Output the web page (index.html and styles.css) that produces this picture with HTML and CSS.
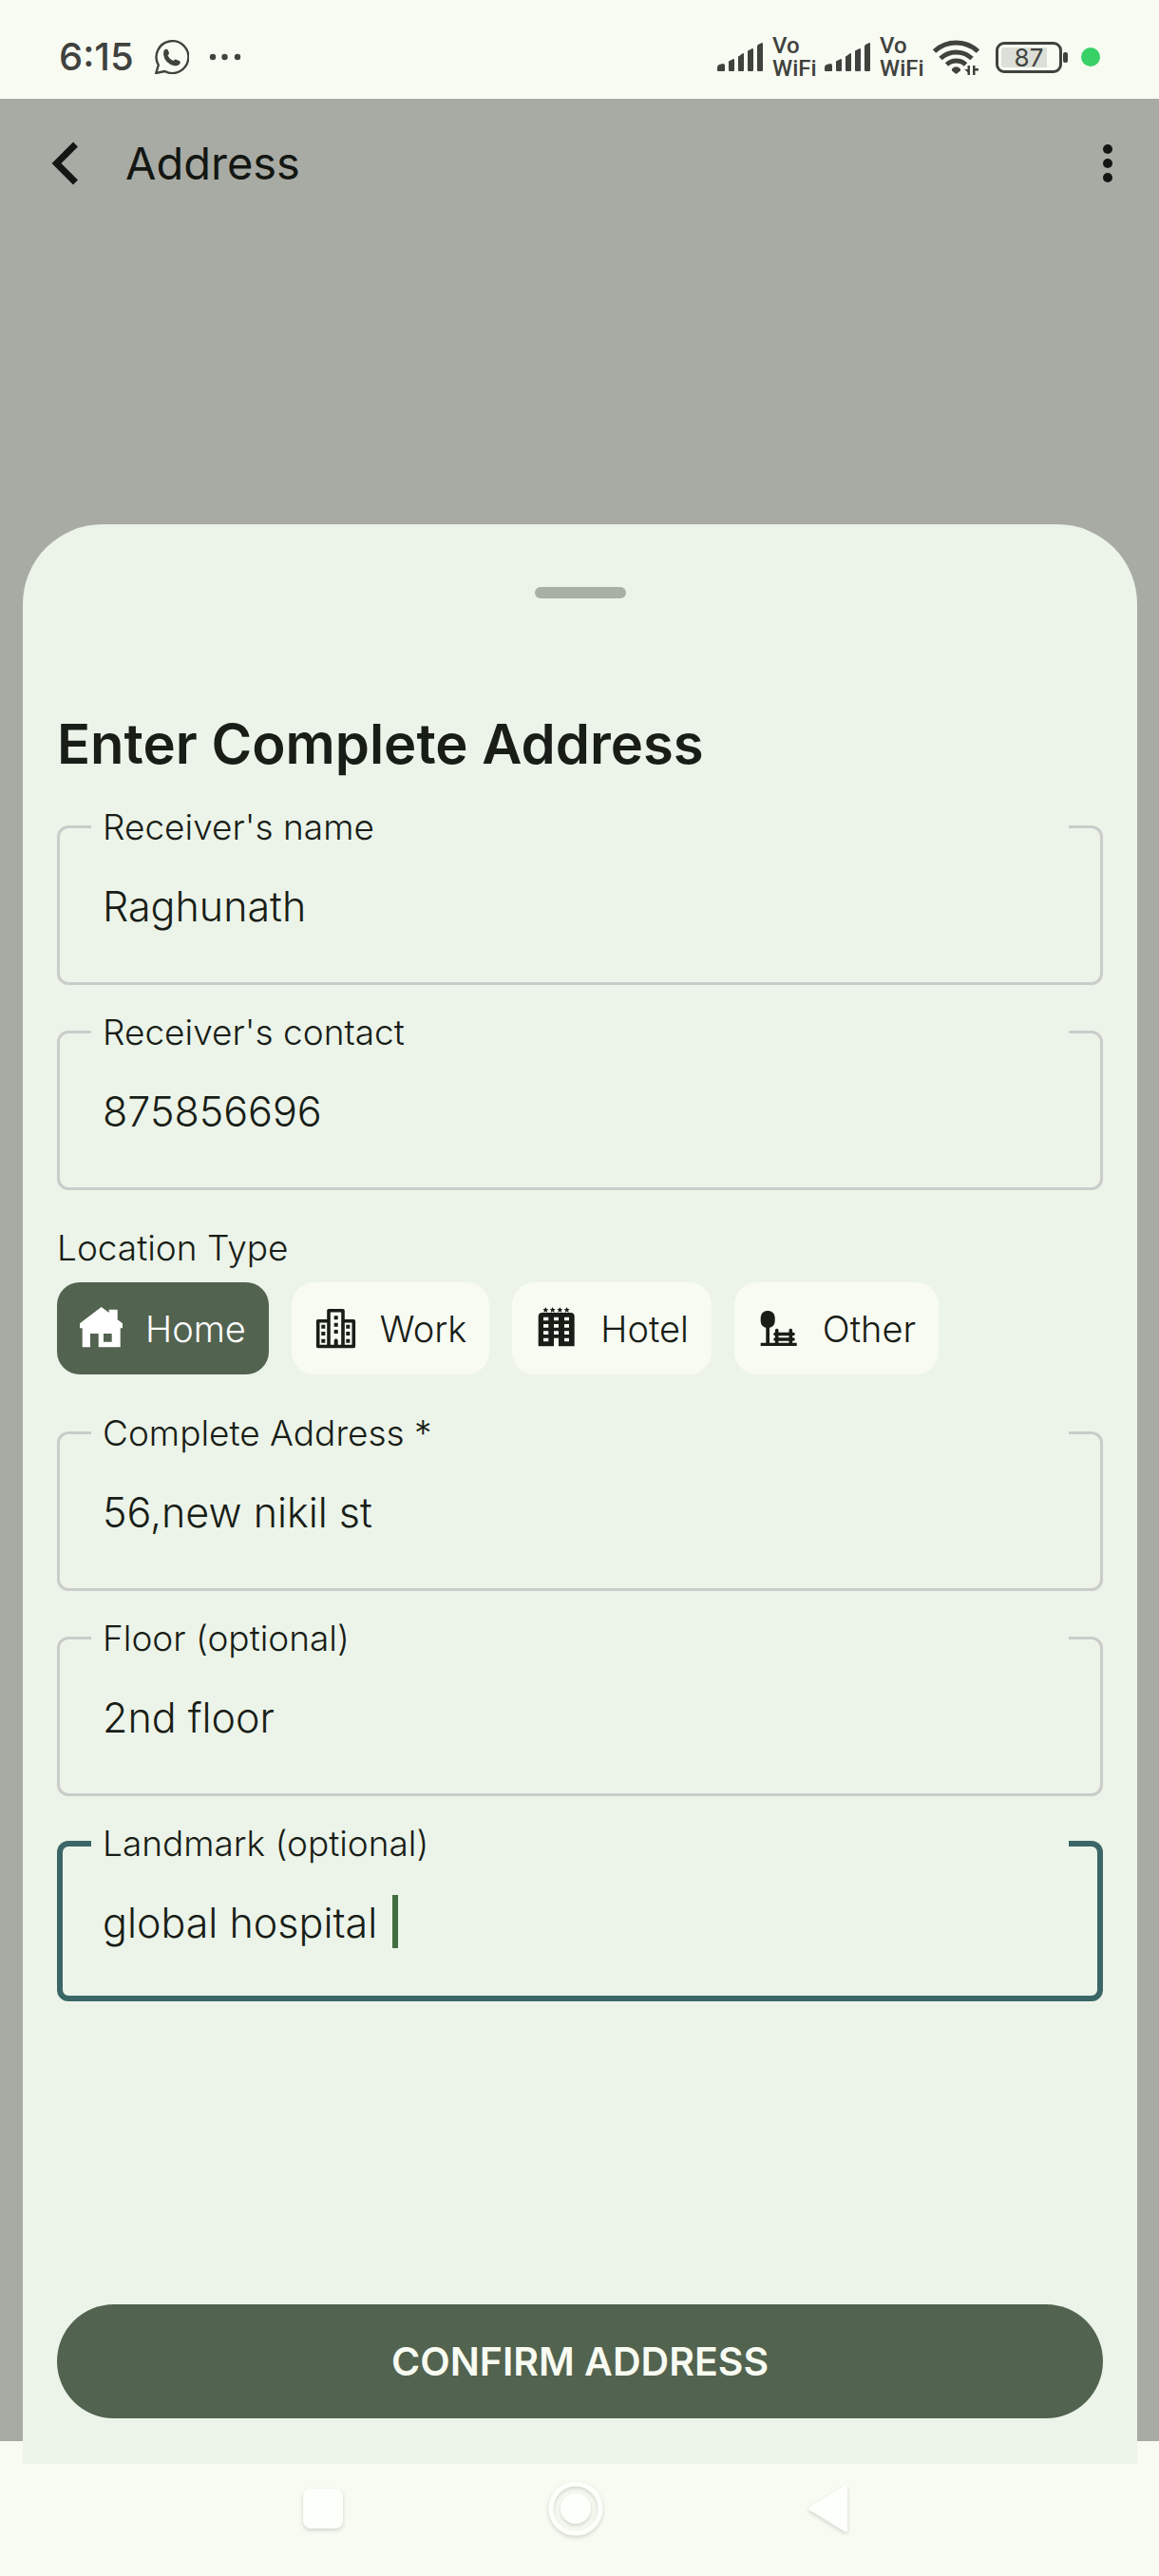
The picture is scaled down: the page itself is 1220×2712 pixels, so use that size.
FILE: index.html
```html
<!DOCTYPE html>
<html lang="en">
<head>
<meta charset="utf-8">
<meta name="viewport" content="width=device-width, initial-scale=1">
<title>Address</title>
<link rel="stylesheet" href="styles.css">
</head>
<body>
<svg width="0" height="0" class="defs" aria-hidden="true">
  <symbol id="signal" viewBox="0 0 48 30">
    <path d="M0 29v-3q0-2 2-3l4-1q2 0 2 2v5q0 1-1 1H1q-1 0-1-1zM12 29V20q0-1 1-1l4-2q1 0 1 1v11q0 1-1 1h-4q-1 0-1-1zM22 29V15q0-1 1-1l4-3q1 0 1 1v17q0 1-1 1h-4q-1 0-1-1zM32 29V9q0-1 1-1l4-2q1 0 1 1v22q0 1-1 1h-4q-1 0-1-1zM42 29V4q0-1 1-2l4-2q1 0 1 1v28q0 1-1 1h-4q-1 0-1-1z"/>
  </symbol>
  <symbol id="star" viewBox="-3 -3 6 6">
    <path d="M0-3L.9-1H3L1.4.6 2 3 0 1.6-2 3-1.4.6-3-1H-.9z"/>
  </symbol>
</svg>

<header class="status">
  <span class="clock">6:15</span>
  <svg class="whatsapp" viewBox="0 0 36 36" aria-label="WhatsApp">
    <path d="M1.200 35L3.800 26.500A16.900 16.900 0 1 1 10.500 33z" fill="none" stroke="currentColor" stroke-width="2.400" stroke-linejoin="round"/>
    <path d="M10.500 10q2.500-1 3.500 1l1 3q0 1-1.500 2.500 2 4 6 5.500 1.500-2 2.500-1.500l4 1.800q1.500.7.5 2.700-2 3-6 2.200-10-2.500-11.500-12-.300-3.500 1.500-5.200z" fill="currentColor"/>
  </svg>
  <svg class="more" viewBox="0 0 34 8" aria-hidden="true"><circle cx="4" cy="4" r="3.200"/><circle cx="16.500" cy="4" r="3.200"/><circle cx="30" cy="4" r="3.200"/></svg>
  <span class="spacer"></span>
  <svg class="signal" aria-hidden="true"><use href="#signal"/></svg>
  <span class="vowifi">Vo<br>WiFi</span>
  <svg class="signal" aria-hidden="true"><use href="#signal"/></svg>
  <span class="vowifi">Vo<br>WiFi</span>
  <svg class="wifi" viewBox="0 0 51 38" aria-hidden="true">
    <g fill="none" stroke="currentColor" stroke-width="5">
      <path d="M2.500 13A34 34 0 0 1 48.500 13"/>
      <path d="M9 20.500A24.500 24.500 0 0 1 42 20.500"/>
      <path d="M15.500 27A14.500 14.500 0 0 1 35.500 27"/>
    </g>
    <path d="M21 31.500Q25.500 27 30 31.500V33.500L25.500 37 21 33.500z"/>
    <path d="M40 28v10h-2.500v-3l-3.500-3h3.500v-4zM43 38V28h2.500v3H49v2.500h-3.500V38z"/>
  </svg>
  <span class="battery"><span class="level">87</span></span>
  <span class="privacy"></span>
</header>

<main class="screen">
  <header class="appbar">
    <button class="back" type="button" aria-label="Back">
      <svg viewBox="0 0 30 46"><path d="M25.500 3L5.500 23l20 20" fill="none" stroke="currentColor" stroke-width="7"/></svg>
    </button>
    <h1 class="page-title">Address</h1>
    <button class="menu" type="button" aria-label="More options">
      <svg viewBox="0 0 10 40"><circle cx="5" cy="5" r="5"/><circle cx="5" cy="20" r="5"/><circle cx="5" cy="35" r="5"/></svg>
    </button>
  </header>

  <form class="sheet">
    <div class="handle"></div>
    <h2 class="heading">Enter Complete Address</h2>

    <div class="fields">
      <fieldset class="field">
        <legend><label for="name">Receiver's name</label></legend>
        <input id="name" type="text" value="Raghunath">
      </fieldset>
      <fieldset class="field">
        <legend><label for="contact">Receiver's contact</label></legend>
        <input id="contact" type="tel" value="875856696">
      </fieldset>
    </div>

    <p class="caption" id="type">Location Type</p>
    <div class="chips" role="radiogroup" aria-labelledby="type">
      <label class="chip">
        <input type="radio" name="type" checked>
        <svg viewBox="0 0 45 45"><path fill-rule="evenodd" d="M22.700 0l8 6V2.700h9v10.500l5.300 4.100v5h-2.300v20h-23V28H11v14.300H2.700v-20H0v-5zM25 28v8.700h8.700V28z"/></svg>
        Home
      </label>
      <label class="chip">
        <input type="radio" name="type">
        <svg viewBox="0 0 45 45">
          <path d="M15 41.500V3.700h15v37.800M15 14.700H3.700v26.800h37.600V14.700H30" fill="none" stroke="currentColor" stroke-width="3.600" stroke-linejoin="round"/>
          <path d="M20.700 9.300h4v4h-4zM20.700 16.700h4v4h-4zM20.700 24h4v4h-4zM7.300 18.700h4v4h-4zM7.300 26h4v4h-4zM7.300 33.700h4v4h-4zM33.300 18.700h4v4h-4zM33.300 26h4v4h-4zM33.300 33.700h4v4h-4zM20.700 41v-6q2-3.500 4 0v6z"/>
        </svg>
        Work
      </label>
      <label class="chip">
        <input type="radio" name="type">
        <svg viewBox="0 0 45 45">
          <path fill-rule="evenodd" d="M7.700 6h30q4 0 4 4v31.300H25v-8.600h-5v8.600H3.700V10q0-4 4-4zM9 10.700v3.600h5.300v-3.600zM20 10.700v3.600h5v-3.600zM31 10.700v3.600h5v-3.600zM9 18v3.700h5.300V18zM20 18v3.700h5V18zM31 18v3.700h5V18zM9 25.300V29h5.300v-3.700zM20 25.300V29h5v-3.700zM31 25.300V29h5v-3.700zM9 32.700v3.600h5.300v-3.600zM31 32.700v3.600h5v-3.600z"/>
          <use href="#star" x="8.300" y="0" width="6" height="6"/><use href="#star" x="15.700" y="0" width="6" height="6"/><use href="#star" x="23.300" y="0" width="6" height="6"/><use href="#star" x="30.700" y="0" width="6" height="6"/>
        </svg>
        Hotel
      </label>
      <label class="chip">
        <input type="radio" name="type">
        <svg viewBox="0 0 45 45">
          <rect x="3.700" y="4" width="15" height="18" rx="7"/>
          <path d="M9.300 20H13v18.500H9.300zM3.700 37.700h38V41h-38z"/>
          <path d="M20.700 24.500V38M35.300 24.500V38M19 28.500h19M19 34h19" stroke="currentColor" stroke-width="3.600" stroke-linecap="round"/>
        </svg>
        Other
      </label>
    </div>

    <div class="fields">
      <fieldset class="field">
        <legend><label for="address">Complete Address *</label></legend>
        <input id="address" type="text" value="56,new nikil st" required>
      </fieldset>
      <fieldset class="field">
        <legend><label for="floor">Floor (optional)</label></legend>
        <input id="floor" type="text" value="2nd floor">
      </fieldset>
      <fieldset class="field active">
        <legend><label for="landmark">Landmark (optional)</label></legend>
        <input id="landmark" type="text" value="global hospital ">
        <span class="caret"></span>
      </fieldset>
    </div>

    <button class="confirm" type="button">CONFIRM ADDRESS</button>
  </form>
</main>

<nav class="navbar">
  <button type="button" aria-label="Recent apps"><svg viewBox="0 0 58 58"><rect x="8" y="8" width="42" height="42" rx="8"/></svg></button>
  <button type="button" aria-label="Home"><svg viewBox="0 0 58 58"><circle cx="29" cy="29" r="26" fill="none" stroke="currentColor" stroke-width="5"/><circle cx="29" cy="29" r="16"/></svg></button>
  <button type="button" aria-label="Back"><svg viewBox="0 0 58 58"><path d="M10.500 29L47 6.500v45z" stroke="currentColor" stroke-width="4" stroke-linejoin="round"/></svg></button>
</nav>
</body>
</html>
```
FILE: styles.css
```css
:root {
  --surface: #f8fbf2;
  --sheet: #ecf4e9;
  --scrim: #a8aba4;
  --ink: #191d17;
  --accent: #52634f;
  --focus: #3b6668;
}

* { box-sizing: border-box; }

body {
  margin: 0;
  min-height: 100vh;
  display: flex;
  flex-direction: column;
  background: var(--surface);
  color: var(--ink);
  font-family: Inter, "Liberation Sans", sans-serif;
}

button {
  padding: 0;
  border: 0;
  background: none;
  color: inherit;
  font-family: inherit;
}

svg {
  display: block;
  flex: none;
  fill: currentColor;
}

.defs { position: absolute; }

/* Status bar */
.status {
  display: flex;
  align-items: center;
  height: 104px;
  padding: 16px 62px 0;
  color: #40423e;
}

.clock {
  font-size: 40px;
  font-weight: 500;
  line-height: 48px;
}

.whatsapp { width: 36px; height: 36px; margin: 0 21px 0 22px; }
.more { width: 34px; height: 8px; }
.spacer { flex: 1; }
.signal { width: 48px; height: 30px; margin-right: 10px; }

.vowifi {
  width: 45px;
  margin-right: 10px;
  font: 500 24px/24px Roboto, sans-serif;
}

.wifi { width: 51px; height: 38px; }

.battery {
  position: relative;
  width: 70px;
  height: 33px;
  margin: 0 6px 0 16px;
  padding: 3px;
  border: 3px solid currentColor;
  border-radius: 9px;
}

.battery::after {
  content: "";
  position: absolute;
  left: 68px;
  top: 8px;
  width: 5px;
  height: 11px;
  border-radius: 2px;
  background: currentColor;
}

.level {
  display: block;
  height: 21px;
  border-radius: 3px;
  background: linear-gradient(90deg, #dcdfd7 82%, transparent 82%);
  font-size: 26px;
  line-height: 21px;
  text-align: center;
}

.privacy {
  width: 20px;
  height: 20px;
  margin-left: 14px;
  border-radius: 50%;
  background: #38d167;
}

/* Dimmed page */
.screen {
  flex: 1;
  display: flex;
  flex-direction: column;
  background: var(--scrim);
}

.appbar {
  display: flex;
  align-items: center;
  height: 136px;
  padding: 0 49px 0 54px;
  color: #131612;
}

.back svg { width: 30px; height: 46px; }

.page-title {
  flex: 1;
  margin: 0 0 0 48px;
  font-size: 47px;
  font-weight: 400;
  line-height: 56px;
}

.menu svg { width: 10px; height: 40px; }

/* Bottom sheet */
.sheet {
  position: relative;
  flex: 1;
  display: flex;
  flex-direction: column;
  margin: 312px 23px -24px 24px;
  padding: 66px 36px 48px;
  border-radius: 84px 84px 0 0;
  background: var(--sheet);
}

.handle {
  align-self: center;
  width: 96px;
  height: 12px;
  border-radius: 6px;
  background: #a8afa5;
}

.heading {
  margin: 117px 0 28px;
  font-size: 58px;
  font-weight: 600;
  line-height: 72px;
}

.fields {
  display: flex;
  flex-direction: column;
  gap: 26px;
}

.field {
  position: relative;
  min-width: 0;
  margin: 0;
  padding: 0 33px 20px;
  border: 3px solid #cacccb;
  border-radius: 12px;
}

.field legend {
  width: 100%;
  padding: 0 12px;
  font-size: 37px;
  font-weight: 300;
  line-height: 47px;
}

.field input {
  display: block;
  width: 100%;
  height: 120px;
  padding: 0 12px;
  border: 0;
  outline: 0;
  background: none;
  color: inherit;
  font-family: inherit;
  font-size: 43px;
  font-weight: 300;
}

.field.active {
  padding: 0 30px 17px;
  border: 6px solid var(--focus);
}

.caret {
  position: absolute;
  left: 347px;
  top: 31px;
  width: 6px;
  height: 56px;
  background: #416d42;
}

.caption {
  margin: 37px 0 12px;
  font-size: 37px;
  font-weight: 300;
  line-height: 48px;
}

.chips {
  display: flex;
  flex-wrap: wrap;
  gap: 24px;
  margin-bottom: 38px;
}

.chip {
  position: relative;
  display: flex;
  align-items: center;
  gap: 24px;
  height: 97px;
  padding: 0 24px;
  border-radius: 24px;
  background: var(--surface);
  font-size: 38px;
  font-weight: 300;
}

.chip input {
  position: absolute;
  inset: 0;
  margin: 0;
  opacity: 0;
}

.chip svg { width: 45px; height: 45px; }

.chip:has(:checked) {
  background: var(--accent);
  color: #fff;
}

.confirm {
  height: 120px;
  margin-top: auto;
  border-radius: 60px;
  background: var(--accent);
  color: var(--surface);
  font-size: 41px;
  font-weight: 600;
}

/* System navigation */
.navbar {
  display: flex;
  align-items: center;
  justify-content: center;
  gap: 208px;
  height: 142px;
  padding-right: 8px;
}

.navbar button { color: #fdfffb; }

.navbar svg {
  width: 58px;
  height: 58px;
  overflow: visible;
  filter: drop-shadow(0 2px 2px rgba(0, 0, 0, 0.16));
}
```
